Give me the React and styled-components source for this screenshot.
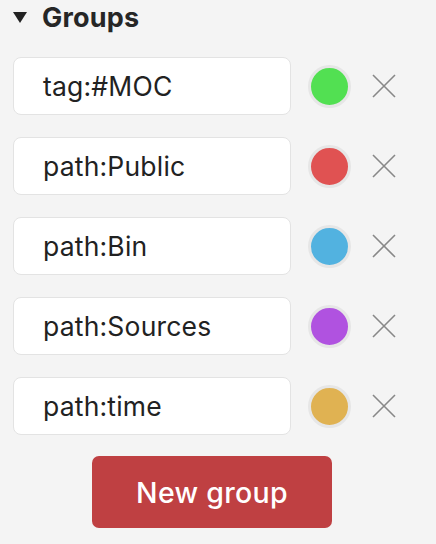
import React from 'react'
import styled, { createGlobalStyle } from 'styled-components'

const Global = createGlobalStyle`
  html, body {
    margin: 0;
    padding: 0;
    background: #f4f4f4;
  }
  body {
    font-family: Inter, "Noto Sans", "Liberation Sans", sans-serif;
    color: #222;
  }
`

const Panel = styled.div`
  padding: 0 13px;
  width: 436px;
  height: 544px;
  box-sizing: border-box;
  overflow: hidden;
`

const Header = styled.div`
  display: flex;
  align-items: center;
  height: 34px;
  gap: 15px;
  margin-bottom: 23px;
`

const Caret = styled.span`
  width: 0;
  height: 0;
  border-left: 7px solid transparent;
  border-right: 7px solid transparent;
  border-top: 11px solid #222;
  margin-top: 1px;
`

const Title = styled.h3`
  margin: 0;
  font-size: 27px;
  font-weight: 700;
  color: #262626;
  letter-spacing: 0.2px;
`

const List = styled.div`
  display: flex;
  flex-direction: column;
  gap: 22px;
`

const Row = styled.div`
  display: flex;
  align-items: center;
  height: 58px;
`

const Query = styled.div`
  width: 278px;
  height: 58px;
  box-sizing: border-box;
  background: #fff;
  border: 1.5px solid #e3e3e3;
  border-radius: 8px;
  display: flex;
  align-items: center;
  padding-left: 29px;
  font-size: 26.5px;
  letter-spacing: 0.2px;
  color: #222;
`

const Swatch = styled.span`
  width: 37px;
  height: 37px;
  border-radius: 50%;
  background: ${p => p.color};
  border: 3px solid #e6e6e6;
  margin-left: 17px;
  flex-shrink: 0;
`

const Remove = styled.button`
  margin-left: 21px;
  width: 24px;
  height: 24px;
  padding: 0;
  border: none;
  background: none;
  display: flex;
  cursor: pointer;
`

const NewButton = styled.button`
  margin: 21px 0 0 79px;
  width: 240px;
  height: 72px;
  border: none;
  border-radius: 7px;
  background: #bf4042;
  color: #fff;
  font-family: inherit;
  font-size: 28.5px;
  font-weight: 500;
  letter-spacing: 0.3px;
`

const groups = [
  { query: 'tag:#MOC', color: '#52e052' },
  { query: 'path:Public', color: '#e05252' },
  { query: 'path:Bin', color: '#52b2e0' },
  { query: 'path:Sources', color: '#b052e0' },
  { query: 'path:time', color: '#e0b252' },
]

const Cross = () => (
  <svg width="24" height="24" viewBox="0 0 24 24">
    <path d="M1 1L23 23M23 1L1 23" stroke="#888" strokeWidth="1.6" fill="none" />
  </svg>
)

export default function App() {
  return (
    <Panel>
      <Global />
      <Header>
        <Caret />
        <Title>Groups</Title>
      </Header>
      <List>
        {groups.map(g => (
          <Row key={g.query}>
            <Query>{g.query}</Query>
            <Swatch color={g.color} />
            <Remove><Cross /></Remove>
          </Row>
        ))}
      </List>
      <NewButton>New group</NewButton>
    </Panel>
  )
}
